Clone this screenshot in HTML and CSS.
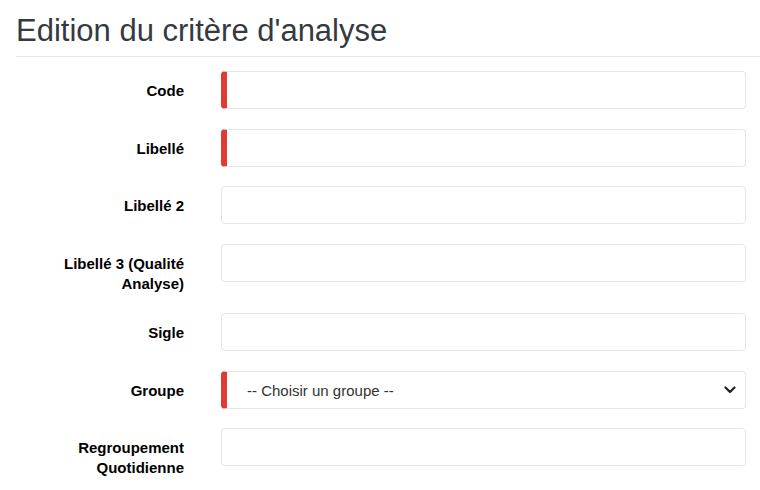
FILE: index.html
```html
<!DOCTYPE html>
<html lang="fr">
<head>
<meta charset="utf-8">
<title>Edition du critère d'analyse</title>
<link rel="stylesheet" href="styles.css">
</head>
<body>
<div class="page">
  <h1 class="title">Edition du critère d'analyse</h1>
  <form class="form">
    <div class="row">
      <label class="label">Code</label>
      <div class="field"><input class="input required" type="text"></div>
    </div>
    <div class="row">
      <label class="label">Libellé</label>
      <div class="field"><input class="input required" type="text"></div>
    </div>
    <div class="row">
      <label class="label">Libellé 2</label>
      <div class="field"><input class="input" type="text"></div>
    </div>
    <div class="row">
      <label class="label">Libellé 3 (Qualité Analyse)</label>
      <div class="field"><input class="input" type="text"></div>
    </div>
    <div class="row">
      <label class="label">Sigle</label>
      <div class="field"><input class="input" type="text"></div>
    </div>
    <div class="row">
      <label class="label">Groupe</label>
      <div class="field">
        <div class="select required">
          <span class="select-text">-- Choisir un groupe --</span>
          <svg class="chevron" width="12" height="8" viewBox="0 0 12 8"><path d="M1.5 1.5 L6 6 L10.5 1.5" fill="none" stroke="#222" stroke-width="2.2" stroke-linecap="round" stroke-linejoin="round"/></svg>
        </div>
      </div>
    </div>
    <div class="row">
      <label class="label">Regroupement Quotidienne</label>
      <div class="field"><input class="input" type="text"></div>
    </div>
  </form>
</div>
</body>
</html>
```
FILE: styles.css
```css
html, body {
  margin: 0;
  padding: 0;
  background: #fff;
}
body {
  font-family: "Liberation Sans", Arial, sans-serif;
  font-size: 15px;
  color: #000;
}
.page {
  padding: 0 0 0 16px;
}
.title {
  margin: 0;
  padding: 15px 0 10px 0;
  font-size: 31px;
  font-weight: 400;
  line-height: 31px;
  color: #343a40;
  border-bottom: 1px solid #e5e5e5;
}
.form {
  padding-top: 14px;
  padding-right: 14px;
}
.row {
  display: flex;
  align-items: flex-start;
  margin-bottom: 19.5px;
}
.label {
  width: 168px;
  flex: none;
  text-align: right;
  font-weight: 700;
  line-height: 20px;
  padding-top: 10px;
  box-sizing: border-box;
  padding-left: 30px;
}
.field {
  flex: 1;
  margin-left: 37px;
}
.input, .select {
  display: block;
  width: 100%;
  height: 38px;
  box-sizing: border-box;
  border: 1px solid #e6e6e6;
  border-radius: 4px;
  background: #fff;
  font: inherit;
  padding: 0 12px;
  outline: none;
}
.required {
  border-left: 6px solid #e03a32;
}
.select {
  display: flex;
  align-items: center;
  justify-content: space-between;
  padding: 0 9px 0 20px;
}
.select-text {
  color: #333;
  font-size: 15px;
  margin-top: 2px;
}
.chevron {
  display: block;
}
```
